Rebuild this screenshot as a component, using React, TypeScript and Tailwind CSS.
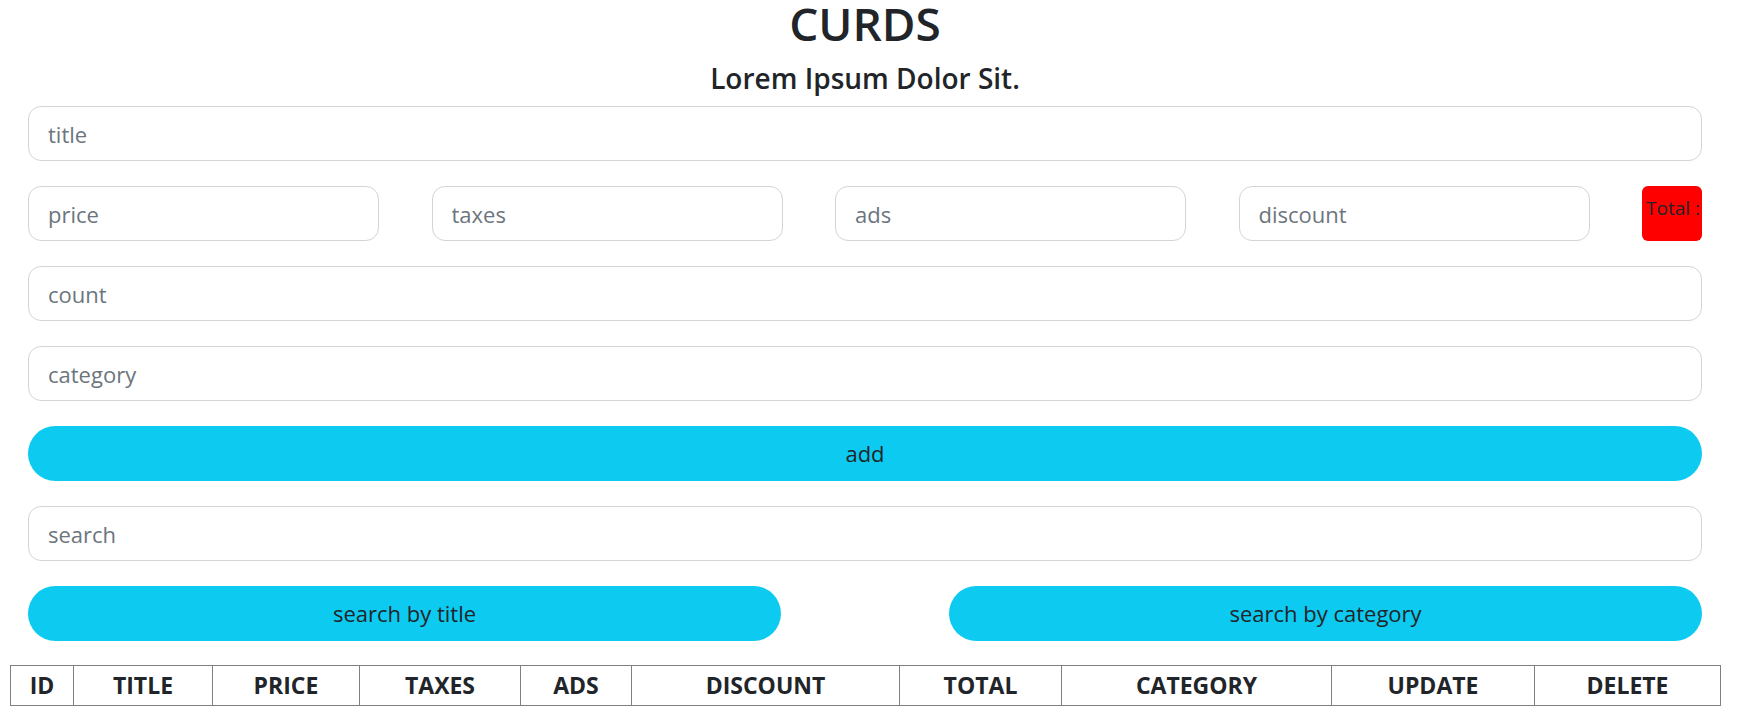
const fields = ["price", "taxes", "ads", "discount"];

const columns = [
  { label: "ID", width: "w-[63px]" },
  { label: "TITLE", width: "w-[139px]" },
  { label: "PRICE", width: "w-[147px]" },
  { label: "TAXES", width: "w-[161px]" },
  { label: "ADS", width: "w-[111px]" },
  { label: "DISCOUNT", width: "w-[268px]" },
  { label: "TOTAL", width: "w-[162px]" },
  { label: "CATEGORY", width: "w-[270px]" },
  { label: "UPDATE", width: "w-[203px]" },
  { label: "DELETE", width: "w-[186px]" },
];

const inputClass =
  "h-[55px] rounded-[13px] border border-[#d4d4d4] bg-white px-[19px] text-[22px] text-[#212529] placeholder:text-[#6c757d] outline-none";

const buttonClass =
  "h-[55px] rounded-full bg-[#0dcaf0] text-[22px] text-[#212529]";

const App = () => {
  return (
    <div className="min-h-[721px] bg-white font-['Open_Sans',sans-serif] text-[#212529]">
      <div className="ml-[28px] w-[1674px]">
        <h1 className="pt-[2px] text-center text-[46px] font-semibold leading-[42px]">
          CURDS
        </h1>
        <h3 className="mt-[18px] text-center text-[28px] font-semibold leading-[32px]">
          Lorem Ipsum Dolor Sit.
        </h3>

        <div className="mt-[12px] flex flex-col gap-[25px]">
          <input className={`${inputClass} w-full`} placeholder="title" />

          <div className="flex items-start justify-between">
            {fields.map((name) => (
              <input
                key={name}
                className={`${inputClass} w-[351px]`}
                placeholder={name}
              />
            ))}
            <small className="h-[55px] w-[60px] overflow-hidden whitespace-nowrap rounded-[6px] bg-[#ff0000] pl-[4px] pt-[10px] text-[19px] leading-[24px] text-[#212529]">
              Total :
            </small>
          </div>

          <input className={`${inputClass} w-full`} placeholder="count" />
          <input className={`${inputClass} w-full`} placeholder="category" />

          <button className={`${buttonClass} w-full`}>add</button>

          <input
            className={`${inputClass} w-full rounded-[5px]`}
            placeholder="search"
          />

          <div className="flex justify-between">
            <button className={`${buttonClass} w-[753px]`}>search by title</button>
            <button className={`${buttonClass} w-[753px]`}>
              search by category
            </button>
          </div>
        </div>
      </div>

      <div className="mt-[24px] px-[10px]">
        <table className="w-[1710px] table-fixed border-collapse">
          <thead>
            <tr>
              {columns.map((col) => (
                <th
                  key={col.label}
                  className={`${col.width} h-[40px] border border-[#808080] p-0 text-center text-[23px] font-bold leading-none`}
                >
                  {col.label}
                </th>
              ))}
            </tr>
          </thead>
          <tbody></tbody>
        </table>
      </div>
    </div>
  );
};

export default App;
